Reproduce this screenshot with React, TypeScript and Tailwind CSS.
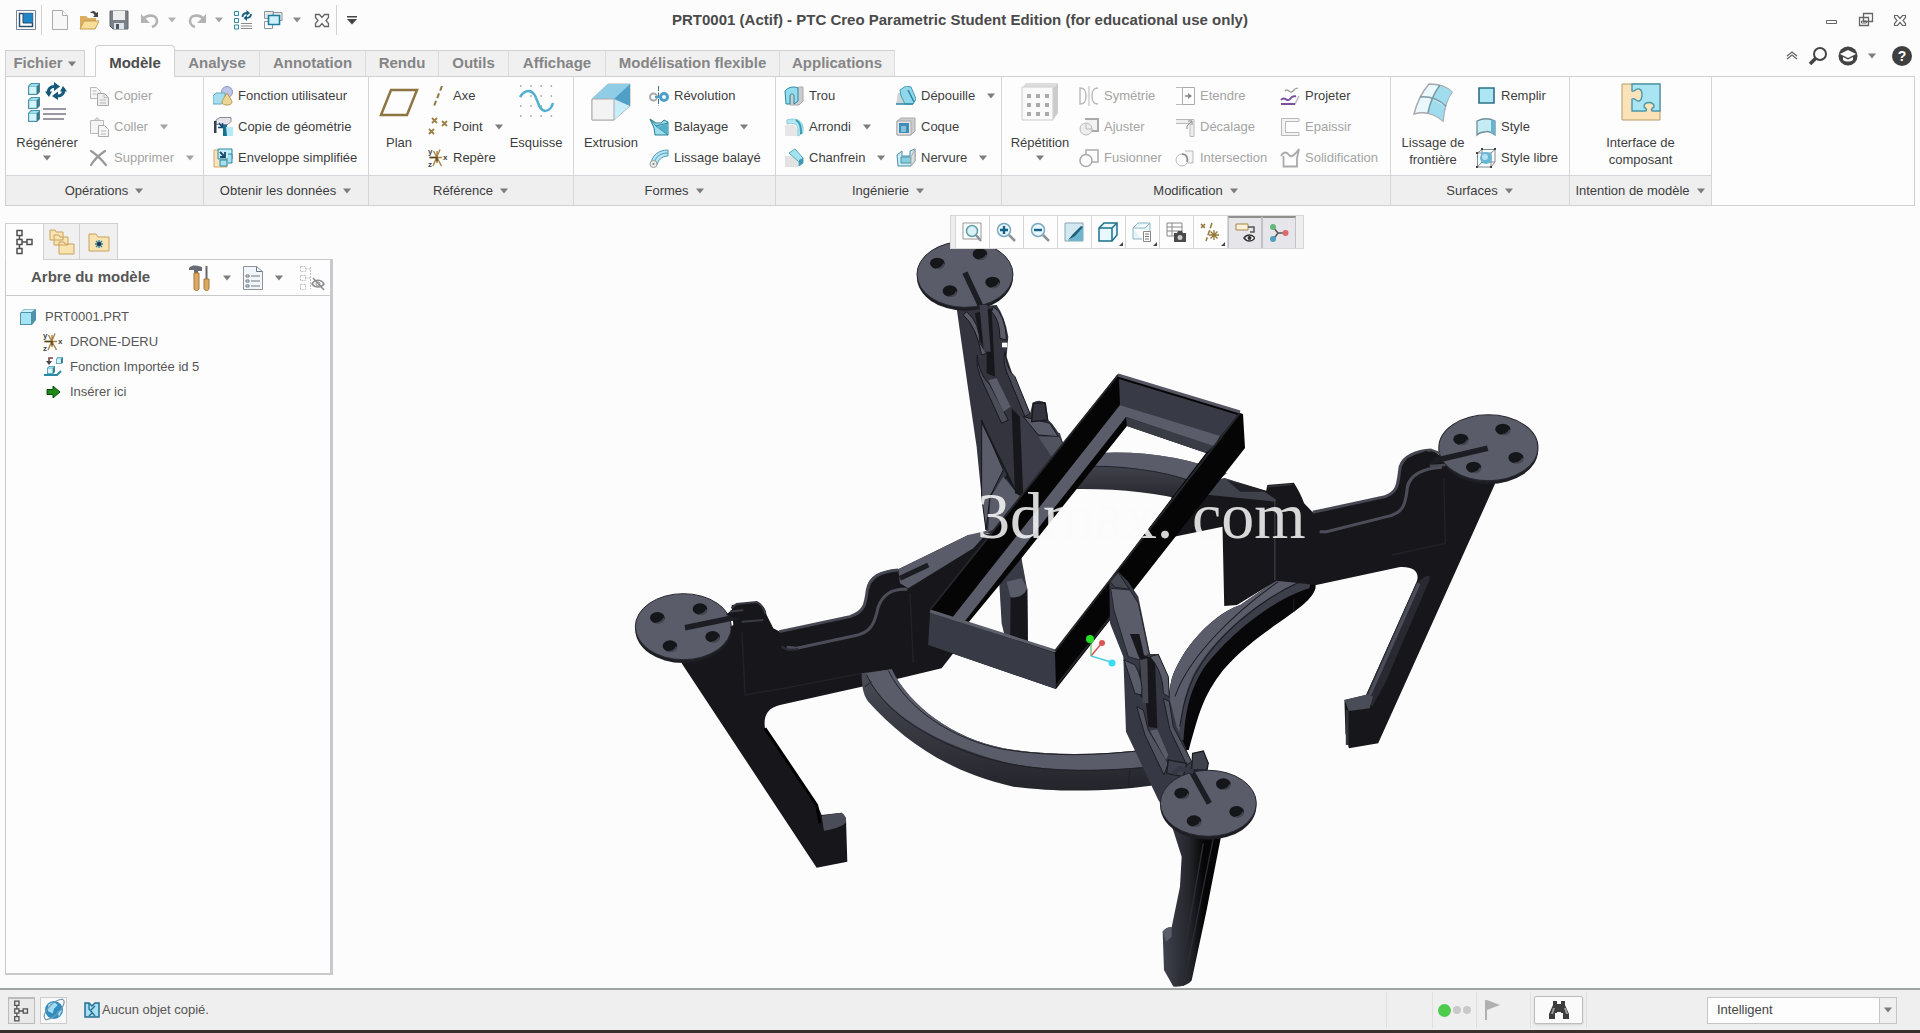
import type { ReactNode } from "react";

type P = { children?: ReactNode };

const Ico = ({ children }: P) => (
  <svg viewBox="0 0 20 20" className="h-5 w-5 shrink-0" fill="none" aria-hidden="true">{children}</svg>
);
const Big = ({ children }: P) => (
  <svg viewBox="0 0 40 40" className="h-10 w-10 shrink-0" fill="none" aria-hidden="true">{children}</svg>
);
const Caret = ({ color = "#7d7d7d" }: { color?: string }) => (
  <svg viewBox="0 0 10 6" className="h-1.5 w-2.5 shrink-0" aria-hidden="true"><path d="M1 0.5h8L5 5.5z" fill={color} /></svg>
);

/* ---------- icons ---------- */
const G = "#b9b9b9";
const Cube = ({ x, y, s = 10 }: { x: number; y: number; s?: number }) => (
  <g transform={`translate(${x} ${y}) scale(${s / 10})`}>
    <path d="M0 2.5 2.5 0H10v7.5L7.5 10H0z" fill="#4b93a8" />
    <path d="M1 3h6v6H1z" fill="#d5f5fc" /><path d="M1 2.7 3 .8h6.2L7 2.7z" fill="#9ae0ef" />
    <path d="M7.5 9.5 9.5 7.5V1L7.5 3z" fill="#3e7688" />
  </g>
);
const Csys = () => (
  <Ico>
    <path d="M1 9.5h13M5 18 12 1.5M5.500 3 13.500 18M9 3v12" stroke="#a88546" strokeWidth="1.400" />
    <path d="M2 9.5h7v4" stroke="#574319" strokeWidth="1.300" />
    <text x="0" y="6" fontSize="8" fontWeight="700" fill="#444" fontFamily="Liberation Sans">y</text>
    <text x="0" y="19" fontSize="8" fontWeight="700" fill="#444" fontFamily="Liberation Sans">z</text>
    <text x="15" y="12" fontSize="8" fontWeight="700" fill="#444" fontFamily="Liberation Sans">x</text>
  </Ico>
);
const Regen = () => (
  <Big>
    <Cube x={1} y={1} s={12} /><Cube x={1} y={15} s={12} /><Cube x={1} y={28} s={12} />
    <path d="M16 27h23M16 32h23M16 37h21" stroke="#9b97a0" strokeWidth="1.800" />
    <path d="M21.500 12c-1-5 2-8 7-7.500M36.500 6.500c1 5-2 8-7 7.500" stroke="#15597a" strokeWidth="3" />
    <path d="M27 0v9l6-4.500zM31 18V9.500L25 14zM18 9.500h7L22 15zM33 9.500h7L36 4z" fill="#15597a" />
  </Big>
);
const Tree = ({ c = "#505050" }: { c?: string }) => (
  <svg viewBox="0 0 20 26" className="h-[26px] w-5" fill="none" stroke={c} strokeWidth="1.500" aria-hidden="true">
    <path d="M2 1.500h5v5H2zM2 10.500h5v5H2zM2 19.500h5v5H2zM12 10.500h5v5h-5zM4.500 6.500v4M4.500 15.500v4M7 13h5" />
  </svg>
);
const icons = {
  copier: <Ico><path d="M1.500 1.500h6l4 4v7h-10z" fill="#f6f6f6" stroke={G} /><path d="M8.500 7.500h7l4 4v8h-11z" fill="#eee" stroke="#aaa" /><path d="M15 7.500v4h4M3.500 5h4M3.500 8h4M11 14h6M11 17h6" stroke={G} /></Ico>,
  coller: <Ico><path d="M1.500 3.500h13v13h-13z" fill="#f4f4f4" stroke={G} /><path d="M5 3.500 8 .5l3 3z" fill="#ddd" stroke={G} /><path d="M9.500 8.500h6l4 4v7h-10z" fill="#f6f6f6" stroke="#aaa" /><path d="M12 14h5M12 17h5" stroke={G} /></Ico>,
  suppr: <Ico><path d="M2 3c5 3 10 8 15 14M16 3C10 7 5 12 2 17" stroke="#999" strokeWidth="2.200" strokeLinecap="round" /></Ico>,
  fonction: <Ico><circle cx="14" cy="6" r="5.500" fill="#bfc4ea" stroke="#8f94c4" /><path d="M0 10 3 7h9v8l-3 3H0z" fill="#a5dff0" stroke="#65a9bd" /><path d="M14 7c2 4 5 7 5 9s-2 3-5 3-5-1-5-3 3-5 5-9z" fill="#ecd596" stroke="#b99b50" /></Ico>,
  copie: <Ico><path d="M3 3 7 .5h11v4l-3 3H3z" fill="#e4e4ea" stroke="#8a8a92" /><path d="M1 4h2.500v12H1z" fill="#333f52" /><path d="m6 6 3 4M9.500 6v4.500H5" stroke="#164b73" strokeWidth="1.500" /><path d="M10 8h4v11h-4z" fill="#1a708e" /><path d="M13 10h7v9h-6z" fill="#b4e9f5" /></Ico>,
  env: <Ico><path d="M1 2h13v17H1z" fill="#fbe3bd" stroke="#d4a869" /><path d="M5 1h14v10H5z" fill="#c4edf7" stroke="#2b87a0" /><path d="m7 4 5 5M12 4v5H7" stroke="#174a66" strokeWidth="1.800" /><path d="M7 12h7v6H7zM15 6h4v9h-4" fill="#a5e1f0" stroke="#2b87a0" /></Ico>,
  axe: <Ico><path d="M14 0 6 20" stroke="#8f7748" strokeWidth="2" strokeDasharray="5 3" /></Ico>,
  point: <Ico><path d="m4 1 5 5M9 1 4 6M14 4l5 5M19 4l-5 5M1 12l5 5M6 12l-5 5" stroke="#9c8047" strokeWidth="1.800" /></Ico>,
  repere: <Csys />,
  revol: <Ico><circle cx="4.500" cy="11" r="3.500" stroke="#aaa" strokeWidth="2" /><circle cx="15" cy="11" r="3.500" stroke="#4e9fca" strokeWidth="3" /><path d="M9.500 0v20" stroke="#3d728a" strokeDasharray="5 1.500" /><path d="M6 11h7" stroke="#4e9fca" strokeWidth="2" /></Ico>,
  bal: <Ico><path d="m1 2 6 4h5l3-3 4 2v13H6L5 11z" fill="#9ddcec" stroke="#2b8198" /><path d="m1 2 6 7 12 9M7 9l12-3" stroke="#2b8198" /><path d="m8 10 10-3v10z" fill="#4fb0c8" /></Ico>,
  liss: <Ico><path d="M2 15C3 8 9 2 19 2v6c-7 0-10 5-11 9z" fill="#b6e3f3" stroke="#4e9bb6" /><path d="M5 16C6 9 11 5 19 5" stroke="#4e9bb6" /><circle cx="4.500" cy="16" r="3.500" fill="#eee" stroke="#999" /><circle cx="4.500" cy="16" r="1" fill="#777" /></Ico>,
  trou: <Ico><path d="M6 3 16 1h3v14l-4 4H6z" fill="#ccc" stroke="#aaa" /><path d="M1 5c3-4 9-5 13-3v13l-4 3V9c-2-2-4-1-4 1v8H2z" fill="#92dcee" stroke="#2c87a3" /></Ico>,
  arrondi: <Ico><path d="M1 8h9l4 5v6H1z" fill="#e6e6e6" /><path d="M3 3c9-3 16 1 16 8v5l-5 3V13C14 8 10 5 3 7z" fill="#b3e8f4" stroke="#8ccad8" /><path d="M12 3c5 3 5 8 5 14" stroke="#3d9cb5" strokeWidth="2" /></Ico>,
  chanf: <Ico><path d="M1 8h8l5 5v6H1z" fill="#e2e2e2" /><path d="M5 5 11 1l8 9v5l-4 3v-4z" fill="#a4e2ef" stroke="#4fa9be" /><path d="M15 12v6l4-3v-5z" fill="#3f9ab0" /></Ico>,
  dep: <Ico><path d="M2 7h9v11H0z" fill="#cfd6d8" /><path d="M4 4 10 0l5 1 5 12-3 5H9L5 10z" fill="#8fd8ea" stroke="#4298b1" /><path d="m12 4 6 12M0 18h17" stroke="#2e87a1" strokeWidth="1.500" /></Ico>,
  coque: <Ico><path d="M1 4 5 1h14v13l-4 4H1z" fill="#ccc" stroke="#aaa" /><path d="M1 4h14v14H1z" fill="#e5e5e5" stroke="#aaa" /><path d="M3 6h10v10H3z" fill="#3e8db9" /><path d="M5 9h5v6H5z" fill="#7fc0dd" /></Ico>,
  nerv: <Ico><path d="M1 7 6 3v5h8V3l5-2v12l-4 5H2z" fill="#c8edf6" stroke="#4f8fa3" /><path d="M5 9h10v6H5z" fill="#87cfe2" stroke="#4f8fa3" /><path d="M15 9v9l4-5V1z" fill="#ddd" stroke="#aaa" /></Ico>,
  sym: <Ico><path d="M1 2c5 0 6 3 6 8s-1 8-6 8V2zM19 2c-5 0-6 3-6 8s1 8 6 8" stroke={G} strokeWidth="1.400" /><path d="M10 0v20" stroke={G} /></Ico>,
  ajuster: <Ico><path d="M6 2h13v12h-6" stroke="#aaa" strokeWidth="2" fill="#f2f2f2" /><circle cx="7" cy="12" r="6" stroke={G} fill="#eee" /><path d="M7 6v6h6" stroke={G} /></Ico>,
  fus: <Ico><path d="M7 6V2h12v12h-6" stroke="#aaa" strokeWidth="1.500" /><circle cx="7" cy="12.500" r="6" stroke="#aaa" strokeWidth="1.500" /></Ico>,
  etendre: <Ico><path d="M1 1.500h6M1 18.500h6" stroke={G} /><path d="M7.500 1.500h12v17h-12z" fill="#fff" stroke="#aaa" /><path d="M10 10h6" stroke="#888" strokeWidth="1.500" /><path d="m13 7 4 3-4 3z" fill="#888" /></Ico>,
  decal: <Ico><path d="M1 2.500h18v17h-4V6.500H1" fill="#eee" stroke={G} /><path d="M12 12V9l5-5M13 4h4v4" stroke="#888" /></Ico>,
  inter: <Ico><path d="M10 3h8v12h-5" stroke={G} fill="#f4f4f4" /><circle cx="7" cy="12" r="6" stroke={G} /><path d="M7 6c5 0 6 5 5 8" stroke="#888" strokeWidth="1.500" /></Ico>,
  proj: <Ico><path d="M5 5c3-4 5 4 8 0s3-2 5-3" stroke="#999" strokeWidth="1.300" /><path d="M2 18h13l4-8" stroke={G} strokeWidth="1.500" /><path d="M1 14c4-5 6 3 9-1s4-2 6-3M1 18h14" stroke="#7a4fa0" strokeWidth="2" /></Ico>,
  epais: <Ico><path d="M19 1.500H1.500v17H19v-3H5.500v-11H19z" fill="#f3f3f3" stroke={G} /></Ico>,
  solid: <Ico><path d="M1 8c3-5 6-4 8-1s6 0 10-6l-2 9v8.500H3.500V8" stroke="#aaa" strokeWidth="1.800" /></Ico>,
  rempl: <Ico><path d="M3 2h15v15H3z" fill="#ade5f2" stroke="#2b7187" strokeWidth="1.600" /></Ico>,
  style: <Ico><path d="M1 4c6-3 12-3 18 0v14c-4-3-8-4-10-3-4 0-6 1-8 3z" fill="#c5ebf5" stroke="#6f8f99" strokeWidth="1.300" /><path d="M15 3v13l4 2V4z" fill="#67b5cf" /></Ico>,
  libre: <Ico><path d="M1.500 5 6 1.500h13V14l-4 5H1.500zM6 1.500V14M6 14h13M6 14l-4.500 5M15 19V5l4-3.500M1.500 5H15" stroke="#7c8c93" /><circle cx="10" cy="10" r="6" fill="#67b7d6" /><circle cx="9" cy="9" r="3" fill="#b4e0ef" /><path d="M0 4h2v2H0zM5 0h2v2H5zM18 0h2v2h-2zM0 18h2v2H0zM14 18h2v2h-2z" fill="#444" /></Ico>,
};
type IconName = keyof typeof icons;

/* ---------- ribbon ---------- */
type RowT = { i: IconName; t: string; c?: boolean; off?: boolean };
const Rows = ({ w, rows }: { w: string; rows: RowT[] }) => (
  <div className={`flex flex-col pt-[3px] ${w}`}>
    {rows.map((r) => (
      <button key={r.t} type="button" disabled={r.off} className={`flex h-[31px] items-center gap-[5px] whitespace-nowrap text-left ${r.off ? "text-[#a4a4a4]" : "text-[#3d3d3d]"}`}>
        {icons[r.i]}
        <span>{r.t}</span>
        {r.c && <span className="pl-[6px]"><Caret color={r.off ? "#a4a4a4" : "#7d7d7d"} /></span>}
      </button>
    ))}
  </div>
);
const BigBtn = ({ w, icon, label, caret }: { w: string; icon: ReactNode; label: ReactNode; caret?: boolean }) => (
  <button type="button" className={`flex flex-col items-center pt-[5px] leading-[17px] text-[#3d3d3d] ${w}`}>
    {icon}
    <span className="mt-3 text-center whitespace-nowrap">{label}</span>
    {caret && <span className="mt-1 flex"><Caret /></span>}
  </button>
);
const Group = ({ w, label, pl, children }: P & { w: string; label: string; pl: string }) => (
  <section className={`flex shrink-0 flex-col border-r border-[#d6d6da] ${w}`}>
    <div className={`flex h-[98px] ${pl}`}>{children}</div>
    <button type="button" className="flex h-[30px] items-center justify-center gap-1.5 border-t border-[#d6d6da] bg-[#efeff0] whitespace-nowrap text-[#3d3d3d]">
      {label}<Caret />
    </button>
  </section>
);

const Ribbon = () => (
  <div className="mx-[5px] flex overflow-hidden border border-t-0 border-[#d0d0d3] bg-[#fdfdfd]">
    <Group w="w-[198px]" pl="pl-1" label="Opérations">
      <BigBtn w="w-[74px]" icon={<Regen />} label="Régénérer" caret />
      <Rows w="pl-[5px]" rows={[{ i: "copier", t: "Copier", off: true }, { i: "coller", t: "Coller", c: true, off: true }, { i: "suppr", t: "Supprimer", c: true, off: true }]} />
    </Group>
    <Group w="w-[165px]" pl="pl-[9px]" label="Obtenir les données">
      <Rows w="w-auto" rows={[{ i: "fonction", t: "Fonction utilisateur" }, { i: "copie", t: "Copie de géométrie" }, { i: "env", t: "Enveloppe simplifiée" }]} />
    </Group>
    <Group w="w-[205px]" pl="pl-1" label="Référence">
      <BigBtn w="w-[52px]" label="Plan" icon={<Big><path d="M12 8h26L28 33H2z" stroke="#8d7440" strokeWidth="2.500" /></Big>} />
      <Rows w="w-[76px] pl-[3px]" rows={[{ i: "axe", t: "Axe" }, { i: "point", t: "Point", c: true }, { i: "repere", t: "Repère" }]} />
      <BigBtn w="w-[70px]" label="Esquisse" icon={<Big>
        <path d="M4 4h34M4 14h34M4 24h34M4 34h34" stroke="#999" strokeWidth="1.500" strokeDasharray="1.500 8.700" />
        <path d="M4 15c3-5 9-9 14-3 4 5 4 16 11 17 4 0 7-4 8-8" stroke="#4fb0d1" strokeWidth="2.500" />
      </Big>} />
    </Group>
    <Group w="w-[202px]" pl="pl-1" label="Formes">
      <BigBtn w="w-[66px]" label="Extrusion" icon={<Big>
        <path d="m1 17 16-15h22v22L23 38H1z" fill="#cfeaf5" stroke="#b5b5b5" /><path d="M1 17 17 2h22L24 17z" fill="#8fcde6" />
        <path d="M39 2v22L23 17z" fill="#4f9fc6" /><path d="m24 22 14 2-14 13z" fill="#c5eefa" /><path d="M1 17h22v21H1z" fill="#f3f3f3" stroke="#aaa" />
      </Big>} />
      <Rows w="pl-[5px]" rows={[{ i: "revol", t: "Révolution" }, { i: "bal", t: "Balayage", c: true }, { i: "liss", t: "Lissage balayé" }]} />
    </Group>
    <Group w="w-[226px]" pl="pl-2" label="Ingénierie">
      <Rows w="w-[112px]" rows={[{ i: "trou", t: "Trou" }, { i: "arrondi", t: "Arrondi", c: true }, { i: "chanf", t: "Chanfrein", c: true }]} />
      <Rows w="w-auto" rows={[{ i: "dep", t: "Dépouille", c: true }, { i: "coque", t: "Coque" }, { i: "nerv", t: "Nervure", c: true }]} />
    </Group>
    <Group w="w-[389px]" pl="pl-1" label="Modification">
      <BigBtn w="w-[68px]" label="Répétition" caret icon={<Big>
        <path d="m33 6 5-5v30l-5 7z" fill="#ccc" /><path d="m2 6 4-5h32l-5 5z" fill="#ddd" /><path d="M2 5h31v33H2z" fill="#fafafa" stroke="#ccc" />
        <path d="M7 12h4v4H7zM16 12h4v4h-4zM25 12h4v4h-4zM7 21h4v4H7zM16 21h4v4h-4zM25 21h4v4h-4zM7 30h4v4H7zM16 30h4v4h-4zM25 30h4v4h-4z" fill="#aaa" />
      </Big>} />
      <Rows w="w-[101px] pl-[5px]" rows={[{ i: "sym", t: "Symétrie", off: true }, { i: "ajuster", t: "Ajuster", off: true }, { i: "fus", t: "Fusionner", off: true }]} />
      <Rows w="w-[105px]" rows={[{ i: "etendre", t: "Etendre", off: true }, { i: "decal", t: "Décalage", off: true }, { i: "inter", t: "Intersection", off: true }]} />
      <Rows w="w-auto" rows={[{ i: "proj", t: "Projeter" }, { i: "epais", t: "Epaissir", off: true }, { i: "solid", t: "Solidification", off: true }]} />
    </Group>
    <Group w="w-[179px]" pl="pl-1" label="Surfaces">
      <BigBtn w="w-[76px]" label={<>Lissage de<br />frontière</>} icon={<Big>
        <path d="M1 32C4 20 9 10 16 2c9 0 17 2 23 8-6 8-8 18-9 29C22 32 12 29 1 32z" fill="#eaf8fc" stroke="#a8a8ad" strokeWidth="1.500" />
        <path d="M27 4c5 1 9 3 12 6-3 4-5 9-7 14-3-3-7-6-12-8 2-5 4-9 7-12zM19 17c-2 5-4 10-4 14 6 1 11 4 15 8 0-6 1-11 2-15z" fill="#9fdcee" />
        <path d="M27 3c-6 8-10 17-12 28M7 15c10-1 19 3 26 9" stroke="#7a9aa5" strokeWidth="1.500" />
      </Big>} />
      <Rows w="pl-[5px]" rows={[{ i: "rempl", t: "Remplir" }, { i: "style", t: "Style" }, { i: "libre", t: "Style libre" }]} />
    </Group>
    <Group w="w-[142px]" pl="justify-center" label="Intention de modèle">
      <BigBtn w="w-[90px]" label={<>Interface de<br />composant</>} icon={<Big>
        <path d="M1 2h38v36H1z" fill="#fbe2b8" stroke="#b79b67" />
        <path d="M11 2h28v27h-7c-3 0-1-3 1-4 1-6-11-6-10 0 2 1 4 4 1 4H11V17c3-2 4 3 7 2 4-2 4-11 0-12-3-1-4 3-7 2z" fill="#a9e4f2" stroke="#4b97ab" strokeWidth="1.400" />
      </Big>} />
    </Group>
  </div>
);

/* ---------- title bar ---------- */
const Sep = () => <span className="h-[30px] w-px bg-[#d2d2d2]" />;
const QBtn = ({ w, label, children }: P & { w: string; label: string }) => (
  <button type="button" aria-label={label} className={`flex h-8 items-center justify-center ${w}`}>{children}</button>
);

const TitleBar = () => (
  <header className="grid h-10 grid-cols-[1fr_auto_1fr] items-center">
    <div className="flex items-center pl-[10px]">
      <QBtn w="w-[31px]" label="Menu"><Ico><path d="M.5.5h19v19H.5z" fill="#fff" stroke="#76849a" /><path d="M3.500 3.500h13v13h-13z" fill="#fff" stroke="#4c5a70" strokeWidth="1.500" /><path d="M7 3.500h9.500V13H7z" fill="#1f86c8" /><path d="M3.500 3.500H7V13h9.500v3.500h-13z" stroke="#244b70" /></Ico></QBtn>
      <Sep />
      <QBtn w="w-9" label="Nouveau"><Ico><path d="M2.500.5h10l5 5v14h-15z" fill="#f7f7f7" stroke="#aaa" /><path d="M12.500.5v5h5" fill="#fff" stroke="#aaa" /></Ico></QBtn>
      <QBtn w="w-[22px]" label="Ouvrir"><Ico><path d="M1 18V6h6l2 2h8v10z" fill="#dcae5f" /><path d="m1 19 4-8h15l-4 8z" fill="#fadf9b" stroke="#c3994c" /><path d="M11 3c3-3 5-2 6 0l2-1v5h-5l1.500-1.500C15 3 13 3 11 3z" fill="#444" /></Ico></QBtn>
      <QBtn w="w-[38px]" label="Enregistrer"><Ico><path d="M1 1h18v18H4l-3-3z" fill="#7b8087" stroke="#62666c" /><path d="M4 1h12v9H4z" fill="#eee" /><path d="M5 13h10v6H5z" fill="#d8e4ef" /><path d="M7 14h3v5H7z" fill="#555" /></Ico></QBtn>
      <QBtn w="w-6" label="Annuler"><Ico><path d="M3 10C6 4 17 4 17 11c0 3-2 5-5 6" stroke="#b3b3b3" strokeWidth="2.600" /><path d="M1 4v9h9z" fill="#b3b3b3" /></Ico></QBtn>
      <QBtn w="w-5" label="Liste annuler"><Caret color="#b3b3b3" /></QBtn>
      <QBtn w="w-[30px]" label="Rétablir"><Ico><path d="M17 10C14 4 3 4 3 11c0 3 2 5 5 6" stroke="#b3b3b3" strokeWidth="2.600" /><path d="M19 4v9h-9z" fill="#b3b3b3" /></Ico></QBtn>
      <QBtn w="w-[14px]" label="Liste rétablir"><Caret color="#a5a5a5" /></QBtn>
      <QBtn w="w-[34px]" label="Régénérer"><Ico><path d="M1.500 1.500h4v4h-4zM1.500 8.500h4v4h-4zM1.500 15h4v4h-4z" stroke="#2b8aa5" /><path d="M8 13.500h11M8 16h11M8 18.500h11" stroke="#8a8a8a" strokeWidth="1.200" /><path d="M9.500 7c0-3 2-4 5-4M18 4c0 3-2 4-5 4" stroke="#17607f" strokeWidth="1.800" /><path d="M13.500 0v6L17 3zM14 11V5l-3.500 3z" fill="#17607f" /></Ico></QBtn>
      <QBtn w="w-[26px]" label="Fenêtres"><Ico><path d="M1.500 1.500h9v7h-9zM10 2.500h9v8h-9z" fill="#e8e8e8" stroke="#8b97a3" /><path d="M1.500 11.500h8v7h-8z" stroke="#8b97a3" /><path d="M5.500 5.500h11v9h-11z" fill="#ccf1fb" stroke="#1f7d9b" strokeWidth="1.600" /></Ico></QBtn>
      <QBtn w="w-[22px]" label="Liste fenêtres"><Caret color="#8a8a8a" /></QBtn>
      <QBtn w="w-7" label="Fermer la fenêtre"><Ico><path d="M3.500 4.500h4l2.500 3 2.500-3h4v3L14 10.500l2.500 3v3h-4L10 13.500l-2.500 3h-4v-3l2.500-3-2.500-3z" stroke="#666" strokeWidth="1.300" /></Ico></QBtn>
      <Sep />
      <QBtn w="w-[30px]" label="Personnaliser"><svg viewBox="0 0 10 9" className="h-[9px] w-2.5"><path d="M0 0h10v1.500H0zM0 3h10L5 8.500z" fill="#444" /></svg></QBtn>
    </div>
    <h1 className="text-[15px] font-bold whitespace-nowrap text-[#4a4a4a]">PRT0001 (Actif) - PTC Creo Parametric Student Edition (for educational use only)</h1>
    <div className="flex items-center justify-end pr-[3px]">
      <QBtn w="w-[34px]" label="Réduire"><Ico><path d="M4.500 10.500h10v3h-10z" stroke="#666" /></Ico></QBtn>
      <QBtn w="w-[34px]" label="Restaurer"><Ico><path d="M7.500 3.500h9v8h-9zM3.500 7.500h9v8h-9z" fill="#fcfcfc" stroke="#666" strokeWidth="1.300" /><path d="M5.500 11h5v2h-5z" stroke="#666" /></Ico></QBtn>
      <QBtn w="w-[34px]" label="Fermer"><Ico><path d="M4.500 5.500h3l2.500 3 2.500-3h3v2L13 10.500l2.500 3v2h-3l-2.500-3-2.500 3h-3v-2l2.500-3-2.500-3z" stroke="#666" strokeWidth="1.200" /></Ico></QBtn>
    </div>
  </header>
);

const tabs: [string, string][] = [
  ["Analyse", "w-[85px]"], ["Annotation", "w-[106px]"], ["Rendu", "w-[73px]"], ["Outils", "w-[70px]"],
  ["Affichage", "w-[97px]"], ["Modélisation flexible", "w-[174px]"], ["Applications", "w-[115px]"],
];
const Tabs = () => (
  <nav className="relative flex h-[37px] items-end pl-[5px] text-[15px] font-bold text-[#858585]">
    <span className="absolute inset-x-[5px] bottom-0 h-px bg-[#d0d0d3]" />
    <button type="button" className="flex h-[27px] w-20 items-center justify-center gap-1 border border-[#d0d0d3] bg-[#f0f0f1]">Fichier<Caret /></button>
    <button type="button" className="relative ml-2.5 h-8 w-20 rounded-t-sm border border-b-0 border-[#d0d0d3] bg-[#fdfdfd] pt-1 text-[#4c4c4c]">Modèle</button>
    {tabs.map(([t, w]) => (
      <button key={t} type="button" className={`h-[27px] border-y border-r border-[#d0d0d3] border-r-[#dcdcdf] bg-[#f0f0f1] whitespace-nowrap ${w}`}>{t}</button>
    ))}
    <div className="ml-auto flex items-center self-start pr-2">
      <QBtn w="w-6" label="Réduire le ruban"><Ico><path d="m5 10 5-4 5 4M5 13l5-4 5 4" stroke="#666" strokeWidth="1.300" /></Ico></QBtn>
      <QBtn w="w-7" label="Rechercher"><Ico><circle cx="12" cy="8" r="6" stroke="#444" strokeWidth="2" /><path d="m8 12-6 6" stroke="#444" strokeWidth="3.500" /></Ico></QBtn>
      <QBtn w="w-8" label="Centre de formation"><Ico><circle cx="10" cy="10" r="9.500" fill="#444" /><path d="m2 8 8-4 8 4-8 4z" fill="#fff" /><path d="M5 11v3c3 2 7 2 10 0v-3l-5 2.500z" fill="#fff" /></Ico></QBtn>
      <QBtn w="w-4" label="Liste formation"><Caret /></QBtn>
      <button type="button" aria-label="Aide" className="ml-3 flex h-5 w-5 items-center justify-center rounded-full bg-[#3f3f3f] text-sm text-white">?</button>
    </div>
  </nav>
);

/* ---------- model tree ---------- */
const Panel = () => (
  <aside className="ml-[5px] flex w-[328px] shrink-0 flex-col pt-[17px] pb-[13px] text-[#565656]">
    <div className="relative z-10 -mb-px flex h-[37px] self-start border-t border-l border-[#d0d0d3]">
      <button type="button" aria-label="Arbre" className="flex w-[37px] items-center justify-center bg-[#fdfdfd]"><Tree /></button>
      <button type="button" aria-label="Dossiers" className="flex w-[37px] items-center justify-center border-x border-b border-[#d0d0d3] bg-[#f0f0f1]">
        <svg viewBox="0 0 26 26" className="h-[26px] w-[26px]"><g fill="#f9e3b1" stroke="#c6a261"><path d="M1 3V1h5l1 2h7v8H1zM5 9V6h5l1 2h8v8H5zM10 16v-3h5l1 2h9v10H10z" /></g></svg>
      </button>
      <button type="button" aria-label="Favoris" className="flex w-[38px] items-center justify-center border-r border-b border-[#d0d0d3] bg-[#f0f0f1]">
        <svg viewBox="0 0 22 20" className="h-5 w-[22px]"><path d="M1 19V2h7l2 3h11v14z" fill="#f9e3b1" stroke="#c6a261" /><path d="M11 8v8M7 12h8M8 9l6 6M14 9l-6 6" stroke="#2b7aa0" strokeWidth="1.300" /><circle cx="11" cy="12" r="2" fill="#234" /></svg>
      </button>
    </div>
    <div className="flex flex-1 flex-col border border-r-[3px] border-b-2 border-[#c9c9cc] bg-[#fdfdfd]">
      <div className="flex h-9 items-center border-b border-[#c9c9cc] pr-[5px] pl-[25px]">
        <h2 className="flex-1 text-[15px] font-bold">Arbre du modèle</h2>
        <button type="button" aria-label="Réglages"><svg viewBox="0 0 22 26" className="h-[26px] w-[22px]"><path d="M0 3c4-4 9-2 13-1v4H9v3H5V5H0z" fill="#666b75" /><path d="M5 8h5v16c-1 2-4 2-5 0z" fill="#dca960" stroke="#a3763a" /><path d="M17.500 1v13" stroke="#666" strokeWidth="2" /><path d="M15 14h5v10c-1 2-4 2-5 0z" fill="#dca960" stroke="#a3763a" /></svg></button>
        <span className="px-[11px]"><Caret /></span>
        <button type="button" aria-label="Affichage"><svg viewBox="0 0 20 26" className="h-[26px] w-5" fill="none"><path d="M.5 1.500h13l6 5v18H.5z" fill="#f3f6f9" stroke="#8d949b" /><path d="M13.500 1.500v5h6M3 10h3v2H3zM3 15h3v2H3zM3 20h3v2H3zM8 11h9M8 16h9M8 21h9" stroke="#6d7884" /></svg></button>
        <span className="px-[11px]"><Caret /></span>
        <button type="button" aria-label="Masquer" className="ml-1"><svg viewBox="0 0 26 26" className="h-[26px] w-[26px]" fill="none" stroke="#c0c0c0"><path d="M1.500 1.500h5v5h-5zM1.500 10.500h5v5h-5zM1.500 19.500h5v5h-5zM6.500 4h6M6.500 13h6M11.500 2v22" strokeDasharray="2 1" /><path d="M13 19c3-5 9-5 12 0-3 4-9 4-12 0zM14 13l11 12" stroke="#8d8d8d" strokeWidth="1.500" /><circle cx="19" cy="19" r="2" stroke="#8d8d8d" /></svg></button>
      </div>
      <ul className="flex flex-col pt-2 text-[13px]">
        <li className="flex h-[25px] items-center gap-[7px] pl-3"><Ico><path d="M2 6 6 2h12v11l-4 5H2z" fill="#4f93a8" /><path d="M3 6h10v11H3z" fill="#a5e5f5" /><path d="m3 5 3.500-2.500H17L13.500 5z" fill="#cdf2fa" /></Ico>PRT0001.PRT</li>
        <li className="flex h-[25px] items-center gap-[7px] pl-[37px]"><Csys />DRONE-DERU</li>
        <li className="flex h-[25px] items-center gap-[7px] pl-[37px]"><Ico><Cube x={13} y={0} s={7} /><path d="M1 18h13l4-4" stroke="#2a8ba8" strokeWidth="2" /><path d="M10 1H6v4" stroke="#7c3c3c" strokeWidth="1.500" /><path d="m3 4 3 4 3-4z" fill="#444" /><Cube x={4} y={9} s={8} /></Ico>Fonction Importée id 5</li>
        <li className="flex h-[25px] items-center gap-[7px] pl-[37px]"><Ico><path d="M4 7.500h6V4l7 6-7 6v-3.500H4z" fill="#1c8a1a" stroke="#0c4c0e" /></Ico>Insérer ici</li>
      </ul>
    </div>
  </aside>
);

/* ---------- view toolbar ---------- */
const Corner = () => <path d="M20 16v4h-4z" fill="#444" />;
const Lens = ({ minus }: { minus?: boolean }) => (
  <Ico><circle cx="8" cy="8" r="6.500" fill="#e6f6fb" stroke="#7aa9bd" strokeWidth="1.500" /><path d="m13 13 6 6" stroke="#8a9499" strokeWidth="2.500" /><path d={minus ? "M4 8h8" : "M4 8h8M8 4v8"} stroke="#14628a" strokeWidth="2.400" /></Ico>
);
const ViewBar = () => {
  const items: [string, ReactNode, boolean][] = [
    ["Recentrer", <Ico><path d="M1 1h18v16H1z" stroke="#999" /><circle cx="10" cy="9" r="5.500" fill="#d8f1f6" stroke="#5fa0a8" strokeWidth="1.500" /><path d="m14 13 5 6" stroke="#8a9499" strokeWidth="2.500" /></Ico>, false],
    ["Zoom avant", <Lens />, false],
    ["Zoom arrière", <Lens minus />, false],
    ["Repeindre", <Ico><path d="M1 1h18v18H1z" fill="#d3e9f1" stroke="#8aa7b3" /><path d="M19 4v15H4z" fill="#6db6cb" /><path d="M17 4 9 12l-5 6 7-4 8-9z" fill="#1f5f7c" /></Ico>, false],
    ["Style d'affichage", <Ico><path d="M1 6 6 1h13v12l-5 6H1z" fill="#e8f9fd" stroke="#1d6f8c" strokeWidth="1.500" /><path d="M1 6h13v13M14 6l5-5" stroke="#1d6f8c" strokeWidth="1.500" /></Ico>, false],
    ["Orientations", <Ico><path d="M1 6 6 1h12v8M1 6v11h9M1 6h12l5-5" fill="#e4f3f7" stroke="#8fb7c3" /><path d="M11.500 9.500h7v10h-7z" fill="#fff" stroke="#888" /><path d="M13 12h4M13 14.500h4M13 17h4" stroke="#777" /></Ico>, false],
    ["Gestionnaire de vues", <Ico><path d="M1 1h15v13H1zM1 5h15M1 9h15M6 1v13" stroke="#888" /><path d="M8 11h3l1-2h4l1 2h3v9H8z" fill="#4a4a4a" /><circle cx="14" cy="15.500" r="2.500" fill="#ccc" /></Ico>, false],
    ["Références", <Ico><path d="m1 2 4 4M5 2 1 6M12 1 6 19" stroke="#97783b" strokeWidth="1.500" strokeDasharray="5.500 2" /><path d="M14 8v10M9 13h10M10.500 9.500l7 7M17.500 9.500l-7 7" stroke="#97783b" strokeWidth="1.300" /></Ico>, false],
    ["Annotations", <Ico><path d="M1 1h12v6H1z" fill="#fbf0da" stroke="#a88546" /><path d="M13 4h6v5h-4" stroke="#555" strokeWidth="1.500" /><path d="M9 15c3-4 8-4 11 0-3 4-8 4-11 0z" fill="#fff" stroke="#333" strokeWidth="1.400" /><circle cx="14.500" cy="15" r="2" fill="#333" /></Ico>, true],
    ["Centre de rotation", <Ico><path d="m4 4 5 6-5 7M9 10h8" stroke="#555" strokeWidth="1.500" /><circle cx="4" cy="4" r="3" fill="#62b97b" /><circle cx="4" cy="16" r="3" fill="#4ea0bd" /><circle cx="16.500" cy="10" r="3" fill="#dc6b6b" /></Ico>, true],
  ];
  return (
    <div className="absolute top-[9px] left-1/2 flex h-[34px] -translate-x-1/2 border border-[#d6d6d6] bg-[#eeeeef]">
      <span className="w-[5px] border-r border-[#d6d6d6]" />
      {items.map(([label, icon, on], n) => (
        <button key={label} type="button" aria-label={label} className={`relative flex w-[34px] items-center justify-center border-r border-[#d6d6d6] ${on ? "border-x border-t-2 border-x-[#c2c2c6] border-t-[#8f8f8f] bg-[#e6e6ea]" : "bg-[#fdfdfd]"}`}>
          {icon}
          {(n === 4 || n === 5 || n === 7) && <svg viewBox="0 0 20 20" className="absolute right-0.5 bottom-0.5 h-5 w-5"><Corner /></svg>}
        </button>
      ))}
      <span className="w-[7px]" />
    </div>
  );
};

/* ---------- 3D part ---------- */
const L = "#5a5c69";
const M = "#383a45";
const D = "#17171b";
const Disk = ({ cx, cy, holes, slot }: { cx: number; cy: number; holes: [number, number][]; slot: string }) => (
  <g>
    <ellipse cx={cx} cy={cy + 9} rx="144" ry="100" fill="#1d1e23" />
    <ellipse cx={cx} cy={cy} rx="144" ry="99" fill={L} stroke="#26272e" strokeWidth="3" />
    {holes.map(([x, y]) => (
      <g key={x}><ellipse cx={x} cy={y} rx="22" ry="17" fill="#15161a" /><path d={`M${x - 6} ${y + 15}q20 -2 24 -16l4 6q-4 14 -22 13z`} fill="#43454f" /></g>
    ))}
    <path d={slot} stroke="#1d1e24" strokeWidth="17" />
  </g>
);

const Drone = () => (
  <svg viewBox="333 206 1587 782" className="absolute inset-0 h-full w-full" fill="none" role="img" aria-label="DRONE-DERU">
    <defs>
      <linearGradient id="tube" x1="0" y1="0" x2="0" y2="1"><stop offset="0" stopColor="#4b4d58" /><stop offset="1" stopColor="#24252b" /></linearGradient>
      <linearGradient id="leg" x1="0" y1="0" x2="1" y2="0"><stop offset="0" stopColor="#40424d" /><stop offset="0.450" stopColor="#25262c" /><stop offset="0.700" stopColor="#050506" /></linearGradient>
    </defs>

    {/* rear arm and foot */}
    <g transform="translate(620 230) scale(0.3333)">
      <path d="M1138 1060 1200 960 1222 1080 1224 1265Q1195 1295 1165 1265L1145 1180z" fill={M} />
      <path d="M1172 1100 1222 1075 1224 1265Q1195 1290 1170 1270z" fill={D} />
      <path d="M1160 1055 1205 1045 1222 1075Q1210 1105 1172 1102z" fill={L} />
      <path d="M1010 235 1130 225Q1155 260 1165 320L1160 380 1180 440 1230 552 1238 518Q1260 505 1278 520L1285 570Q1310 590 1335 650L1200 930 1100 910 1085 800 1070 650 1045 480z" fill="#33343e" />
      <path d="M1085 570 1150 720 1110 800 1098 900 1085 800z" fill={L} stroke="#17181d" strokeWidth="3" />
      <path d="M1085 575 1190 790 1160 740 1110 800" stroke="#17181d" strokeWidth="5" />
      <path d="M1150 740 1200 800 1160 880 1105 905 1112 800z" fill={L} />
      <path d="M1040 245Q1080 280 1080 340L1100 370 1085 375Q1070 290 1030 255zM1120 230Q1155 250 1160 330L1140 325Q1140 270 1115 245z" fill={L} stroke="#17181d" strokeWidth="3" />
      <path d="M1072 375Q1075 430 1110 465L1165 570 1145 580 1092 465Q1065 410 1072 375zM1155 365Q1160 420 1185 440L1230 550 1215 560 1170 450Q1145 400 1155 365z" fill="#4a4c57" stroke="#17181d" strokeWidth="3" />
      <path d="M1105 450 1130 445 1172 530 1150 545z" fill={L} />
      <path d="M1065 250 1115 235 1125 440 1100 430 1100 370 1080 330z" fill={D} />
      <path d="M1175 540 1240 580 1320 610 1332 650 1290 700 1200 810 1185 700z" fill="#3b3c47" />
      <path d="M1210 560 1290 580 1315 620 1255 615z" fill={L} stroke="#17181d" strokeWidth="3" />
      <path d="M1255 620 1315 620 1330 645 1298 685z" fill="#51535f" />
      <path d="M1175 535 1200 560 1210 800 1185 790z" fill={D} />
      <path d="M1240 520 1275 518 1283 570 1235 575z" fill="#33343e" stroke="#17181d" strokeWidth="4" />
      <path d="M1146 338h16v14h-16z" fill="#fcfcfc" />
      <Disk cx={1035} cy={133} holes={[[952, 100], [1080, 72], [1118, 157], [990, 183]]} slot="M1035 128 1090 245" />
      <path d="M1078 225h24l10 140h-20z" fill="#3d3e49" />
    </g>

    {/* rear ring section */}
    <g transform="translate(1020 350) scale(0.3444 0.3333)">
      <path d="M150 315Q400 285 600 370L500 455Q330 410 120 418z" fill="url(#tube)" />
      <path d="M150 315Q400 285 600 370L540 410Q380 340 150 350z" fill={L} />
      <path d="M150 350Q380 340 540 410" stroke="#22232a" strokeWidth="3" />
    </g>

    {/* left arm and front ring */}
    <g transform="translate(620 540) scale(0.3333)">
      <path d="M185 370 340 255 335 195 410 185Q435 195 440 225L460 265 480 275 690 230C735 215 740 190 740 150C745 110 780 90 835 88L1045 -15 1150 -20 1000 340 965 385 840 415 725 440 480 495C440 505 430 530 435 565L590 790 605 825 665 818 678 835 682 965 590 983z" fill={D} />
      <path d="M835 88 1045 -15 1110 -30 1060 25 865 145 840 130z" fill={L} />
      <path d="M840 115 925 75" stroke="#1c1d22" strokeWidth="15" />
      <path d="M478 275 690 230C735 215 737 190 742 150C750 110 780 95 835 90" stroke="#454751" strokeWidth="9" />
      <path d="M500 322 530 325 700 288C760 280 765 240 775 200C790 160 820 145 862 148" stroke="#4b4d58" strokeWidth="9" />
      <path d="M485 318Q500 335 535 327" stroke="#2c2d34" strokeWidth="6" />
      <path d="M375 250 430 245M365 260 375 465 490 445 725 400M870 160 880 370" stroke="#222328" strokeWidth="4" />
      <path d="M605 827 665 818Q680 828 678 845 670 862 612 872z" fill="#4a4c57" />
      <path d="M435 565 590 795 600 850" stroke="#000" strokeWidth="9" />
      <Disk cx={190} cy={260} holes={[[112, 233], [240, 207], [150, 318], [278, 290]]} slot="M195 263 380 225" />
      <path d="M318 225 345 200 410 186Q435 195 440 235L425 275 350 275 330 262 370 240z" fill={D} />
      <path d="M334 205 350 192 410 186Q430 194 436 222M330 215 370 210M365 245 430 240" stroke="#3a3c45" strokeWidth="6" />

      <path d="M725 400 815 388C870 500 1000 595 1150 625 1300 650 1440 645 1600 626L1650 730C1450 760 1300 755 1180 740 980 695 850 600 745 485 728 465 725 430 725 400z" fill="url(#tube)" />
      <path d="M740 400 815 388C870 500 1000 595 1150 625 1300 650 1440 645 1600 626L1600 678C1450 695 1300 695 1170 670 1000 630 800 540 740 400z" fill={L} />
      <path d="M740 405C800 540 1000 640 1170 672 1300 697 1450 695 1600 680M805 392C870 520 1010 600 1150 628 1300 652 1440 647 1600 628M735 440 755 425M1525 742 1530 690" stroke="#202127" strokeWidth="3" />
    </g>

    {/* right ring section and right arm */}
    <g transform="translate(1020 350) scale(0.3444 0.3333)">
      <path d="M745 690 860 675 858 715C840 780 700 830 590 960 530 1040 520 1090 490 1200L440 1200 420 1100 438 1000C450 930 540 800 640 765z" fill="#08080a" />
      <path d="M745 690 850 678 840 715C730 750 600 860 530 960 490 1030 480 1090 475 1170L440 1170 425 1100 438 1000C450 930 540 800 640 765z" fill="#3c3e49" />
      <path d="M745 690 840 682C700 740 560 860 500 980 475 1040 470 1080 462 1150L425 1120 438 1000C450 930 540 800 640 765z" fill={L} />
      <path d="M825 690C700 745 565 860 505 980 478 1040 472 1080 464 1130M750 695C620 790 490 920 450 1040M795 745V785" stroke="#1b1c22" strokeWidth="3" />
      <path d="M440 440 520 398 595 385 715 422 718 405 795 398Q815 430 825 460L850 487 1060 440C1100 425 1097 400 1102 350 1110 320 1150 300 1195 298L1250 340 1380 400 1040 1180 955 1195 945 1150 942 1050 1005 1035 1150 700C1165 665 1140 648 1100 652L860 705 745 692 630 765 593 768 588 530 440 562z" fill={D} />
      <path d="M450 440 520 398 595 385 710 425 745 450 740 455 550 435z" fill="#3f414b" />
      <path d="M600 390 720 425 640 425z" fill="#202127" />
      <path d="M850 487 1060 440C1100 425 1097 400 1104 350 1112 320 1150 302 1195 300" stroke="#454751" strokeWidth="9" />
      <path d="M870 545 890 545 1065 500C1115 490 1120 460 1125 410 1135 370 1180 355 1225 352" stroke="#4b4d58" strokeWidth="9" />
      <path d="M1230 365 1235 580 1080 615" stroke="#222328" strokeWidth="4" />
      <path d="M740 450V690M718 410 790 403" stroke="#3a3b43" strokeWidth="4" />
      <path d="M1150 700 1175 680Q1200 670 1185 700L1060 1000 1022 1070 1005 1035z" fill="#292a31" />
      <path d="M1158 700 1015 1035" stroke="#4b4d58" strokeWidth="10" />
      <path d="M942 1050 1010 1033 1025 1040 1015 1075 955 1083z" fill="#4a4c57" />
      <path d="M950 1080V1185" stroke="#33343c" strokeWidth="8" />
      <Disk cx={1360} cy={293} holes={[[1280, 268], [1402, 238], [1440, 323], [1317, 352]]} slot="M1190 335 1358 295" />
      <path d="M1105 370 1125 325 1180 302 1205 320 1190 345 1240 352 1240 385 1130 390z" fill={D} />
      <path d="M1195 300 1220 310M1190 348 1235 345" stroke="#454751" strokeWidth="7" />
      <path d="M1125 410C1135 370 1180 355 1225 352" stroke="#4b4d58" strokeWidth="9" />
    </g>

    {/* tray */}
    <path fillRule="evenodd" d="M1118 374 1243 414 1245 448 1056 689 928 645 930 611zM1127 426 1206 453 1055 652 968 623 1020 560z" fill="#050506" />
    <path d="M1119 379 1238 415 1220 437 1120 405z" fill={M} />
    <path d="M1120 405 1220 436 1214 447 1126 417 965 621 952 618z" fill={L} />
    <path d="M1126 417 1214 446 1206 453 1127 426z" fill="#3a3c45" />
    <path d="M930 612 1055 653 1056 689 928 645z" fill={M} />
    <path d="M930 611 1055 651" stroke="#5d606b" strokeWidth="3" />
    <path d="M1118 375 1240 412" stroke="#555764" strokeWidth="3" />
    <path d="M930 610 1118 375M1055 651 1240 413M1056 686 1130 592" stroke="#24262c" strokeWidth="2" />

    {/* front arm and foot */}
    <g transform="translate(1040 560) scale(0.3333)">
      <path d="M390 780 545 820 500 1050 455 1262Q440 1282 400 1280L372 1230 368 1115Q380 1100 395 1102L420 980 425 890z" fill="url(#leg)" />
      <path d="M520 835 430 1278M490 850 415 1275" stroke="#2c2d34" strokeWidth="4" />
      <path d="M368 1115Q380 1100 395 1102L395 1130 378 1145z" fill={L} />
      <path d="M208 60 235 35 265 65 295 110 330 282 355 282 385 350 390 420 410 500 455 605 460 580 490 575 505 620 470 800 400 790 355 720 258 515 250 290 210 190z" fill="#363843" />
      <path d="M212 85 270 90 295 130 328 282 300 300 265 290 222 150z" fill={L} stroke="#24252c" strokeWidth="3" />
      <path d="M210 65 235 38 268 88 225 82z" fill="#454751" stroke="#202127" strokeWidth="3" />
      <path d="M270 222 298 222 312 285 345 300 352 505 325 500 318 430 295 400 300 300z" fill={D} />
      <path d="M300 300 322 295 325 430 308 428z" fill="#454751" />
      <path d="M252 300 285 315Q310 360 305 405L285 400 262 330zM330 290 355 283 385 350 388 412 370 400Q370 350 345 310z" fill={L} stroke="#1d1e24" strokeWidth="3" />
      <path d="M290 440 310 450 325 510 385 610 372 645 315 525zM370 415 388 425 400 500 455 605 440 615 390 510z" fill="#51535f" stroke="#1d1e24" strokeWidth="3" />
      <path d="M330 512 352 508 385 585 378 600z" fill={L} />
      <path d="M385 600 440 610 430 650 380 640zM458 580 490 573 505 610 500 630 455 630z" fill="#3f414c" stroke="#1d1e24" strokeWidth="4" />
      <Disk cx={505} cy={730} holes={[[425, 700], [550, 672], [590, 755], [462, 783]]} slot="M455 635 508 730" />
      <path d="M400 640 420 625 460 635" stroke="#363843" strokeWidth="14" />
    </g>

    {/* spin centre */}
    <path d="M1091 656V640" stroke="#3fb53f" /><path d="m1091 656 10-12" stroke="#d85555" strokeWidth="1.500" /><path d="m1091 656 20 6" stroke="#4fcfe0" strokeWidth="1.500" />
    <circle cx="1090" cy="639" r="4" fill="#2adf2a" /><circle cx="1102" cy="643" r="3" fill="#d85555" /><circle cx="1112" cy="663" r="3.500" fill="#39dcf2" />

    <text x="977" y="538" fontSize="66" fontFamily="Liberation Serif, serif" fill="#fafafa" fillOpacity="0.850">3dmax.</text>
    <text x="1192" y="538" fontSize="66" fontFamily="Liberation Serif, serif" fill="#fafafa" fillOpacity="0.850">com</text>
  </svg>
);

/* ---------- status bar ---------- */
const VSep = () => <span className="h-9 w-px bg-[#dfdfdf]" />;
const StatusBar = () => (
  <footer className="flex h-[45px] shrink-0 items-center border-t-2 border-b-[3px] border-t-[#9fa3a1] border-b-[#3a3030] bg-[#efefef] pr-[23px] pl-2 text-[13px] text-[#565656]">
    <button type="button" aria-label="Arbre du modèle" className="flex h-[27px] w-[27px] items-center justify-center border border-t-2 border-[#bbb] bg-[#e9e9e9] px-1 py-0.5"><Tree /></button>
    <button type="button" aria-label="Navigateur" className="ml-[5px] flex h-[27px] w-[27px] items-center justify-center border border-[#ccc] bg-[#f8f8f8]">
      <svg viewBox="0 0 20 20" className="h-6 w-6 shrink-0" fill="none"><circle cx="10" cy="10" r="7.500" fill="#2f8dc2" /><path d="M5 6c3-4 7-2 8 0l-3 3-1 4-4-2zM13 11l4-1-3 6z" fill="#9fdcf2" /><path d="M3 18C-1 14 8 2 17 1c5 2-4 15-13 17z" stroke="#7b98a8" /></svg>
    </button>
    <span className="ml-[11px]"><VSep /></span>
    <p className="flex flex-1 items-center gap-0.5 pl-1.5"><svg viewBox="0 0 16 16" className="h-4 w-4" fill="none"><path d="M1 1h4l3 3 3-3h4v14H1z" fill="#a9dff0" stroke="#256e92" strokeWidth="1.500" /><path d="M5 1v6l6 7M11 4 7 8M5 14l3-3" stroke="#256e92" strokeWidth="1.300" /></svg>Aucun objet copié.</p>
    <VSep /><span className="w-[45px]" /><VSep />
    <span className="flex w-[43px] items-center justify-center gap-0.5"><i className="h-[13px] w-[13px] rounded-full bg-[#4ccb4c]" /><i className="h-2 w-2 rounded-full bg-[#c9c9c9]" /><i className="h-2 w-2 rounded-full bg-[#c9c9c9]" /></span>
    <VSep />
    <span className="flex w-[53px] pl-2"><svg viewBox="0 0 16 20" className="h-5 w-4"><path d="M0 0h2v20H0zM2 0l13 5L2 10z" fill="#b0b0b0" /></svg></span>
    <VSep />
    <button type="button" aria-label="Rechercher" className="mx-[3px] flex h-7 w-[49px] items-center justify-center rounded-xs border border-[#bdbdbd] bg-[#fafafa] shadow-sm">
      <Ico><path d="M4 1h4v3h4V1h4v4l4 9v5h-6v-6h-2v-1H8v1H6v6H0v-5l4-9z" fill="#3c3c3c" /><path d="M4 8 2 14h2l2-6zM15 8l2 6h2l-2-6z" fill="#9a9a9a" /></Ico>
    </button>
    <VSep />
    <div className="relative ml-[120px] flex">
      <select aria-label="Filtre de sélection" className="h-[27px] w-[190px] appearance-none border border-[#c6c6c6] bg-[#fdfdfd] pl-[9px] text-[13px] text-[#444]"><option>Intelligent</option></select>
      <span className="pointer-events-none absolute inset-y-px right-px flex w-[17px] items-center justify-center border-l border-[#c6c6c6] bg-[#efefef]"><Caret /></span>
    </div>
  </footer>
);

export default function App() {
  return (
    <div className="flex min-h-screen flex-col bg-[#fcfcfc] font-['Liberation_Sans',Arial,sans-serif] text-[13px]">
      <TitleBar />
      <Tabs />
      <Ribbon />
      <main className="flex flex-1">
        <Panel />
        <div className="relative min-w-0 flex-1">
          <Drone />
          <ViewBar />
        </div>
      </main>
      <StatusBar />
    </div>
  );
}
